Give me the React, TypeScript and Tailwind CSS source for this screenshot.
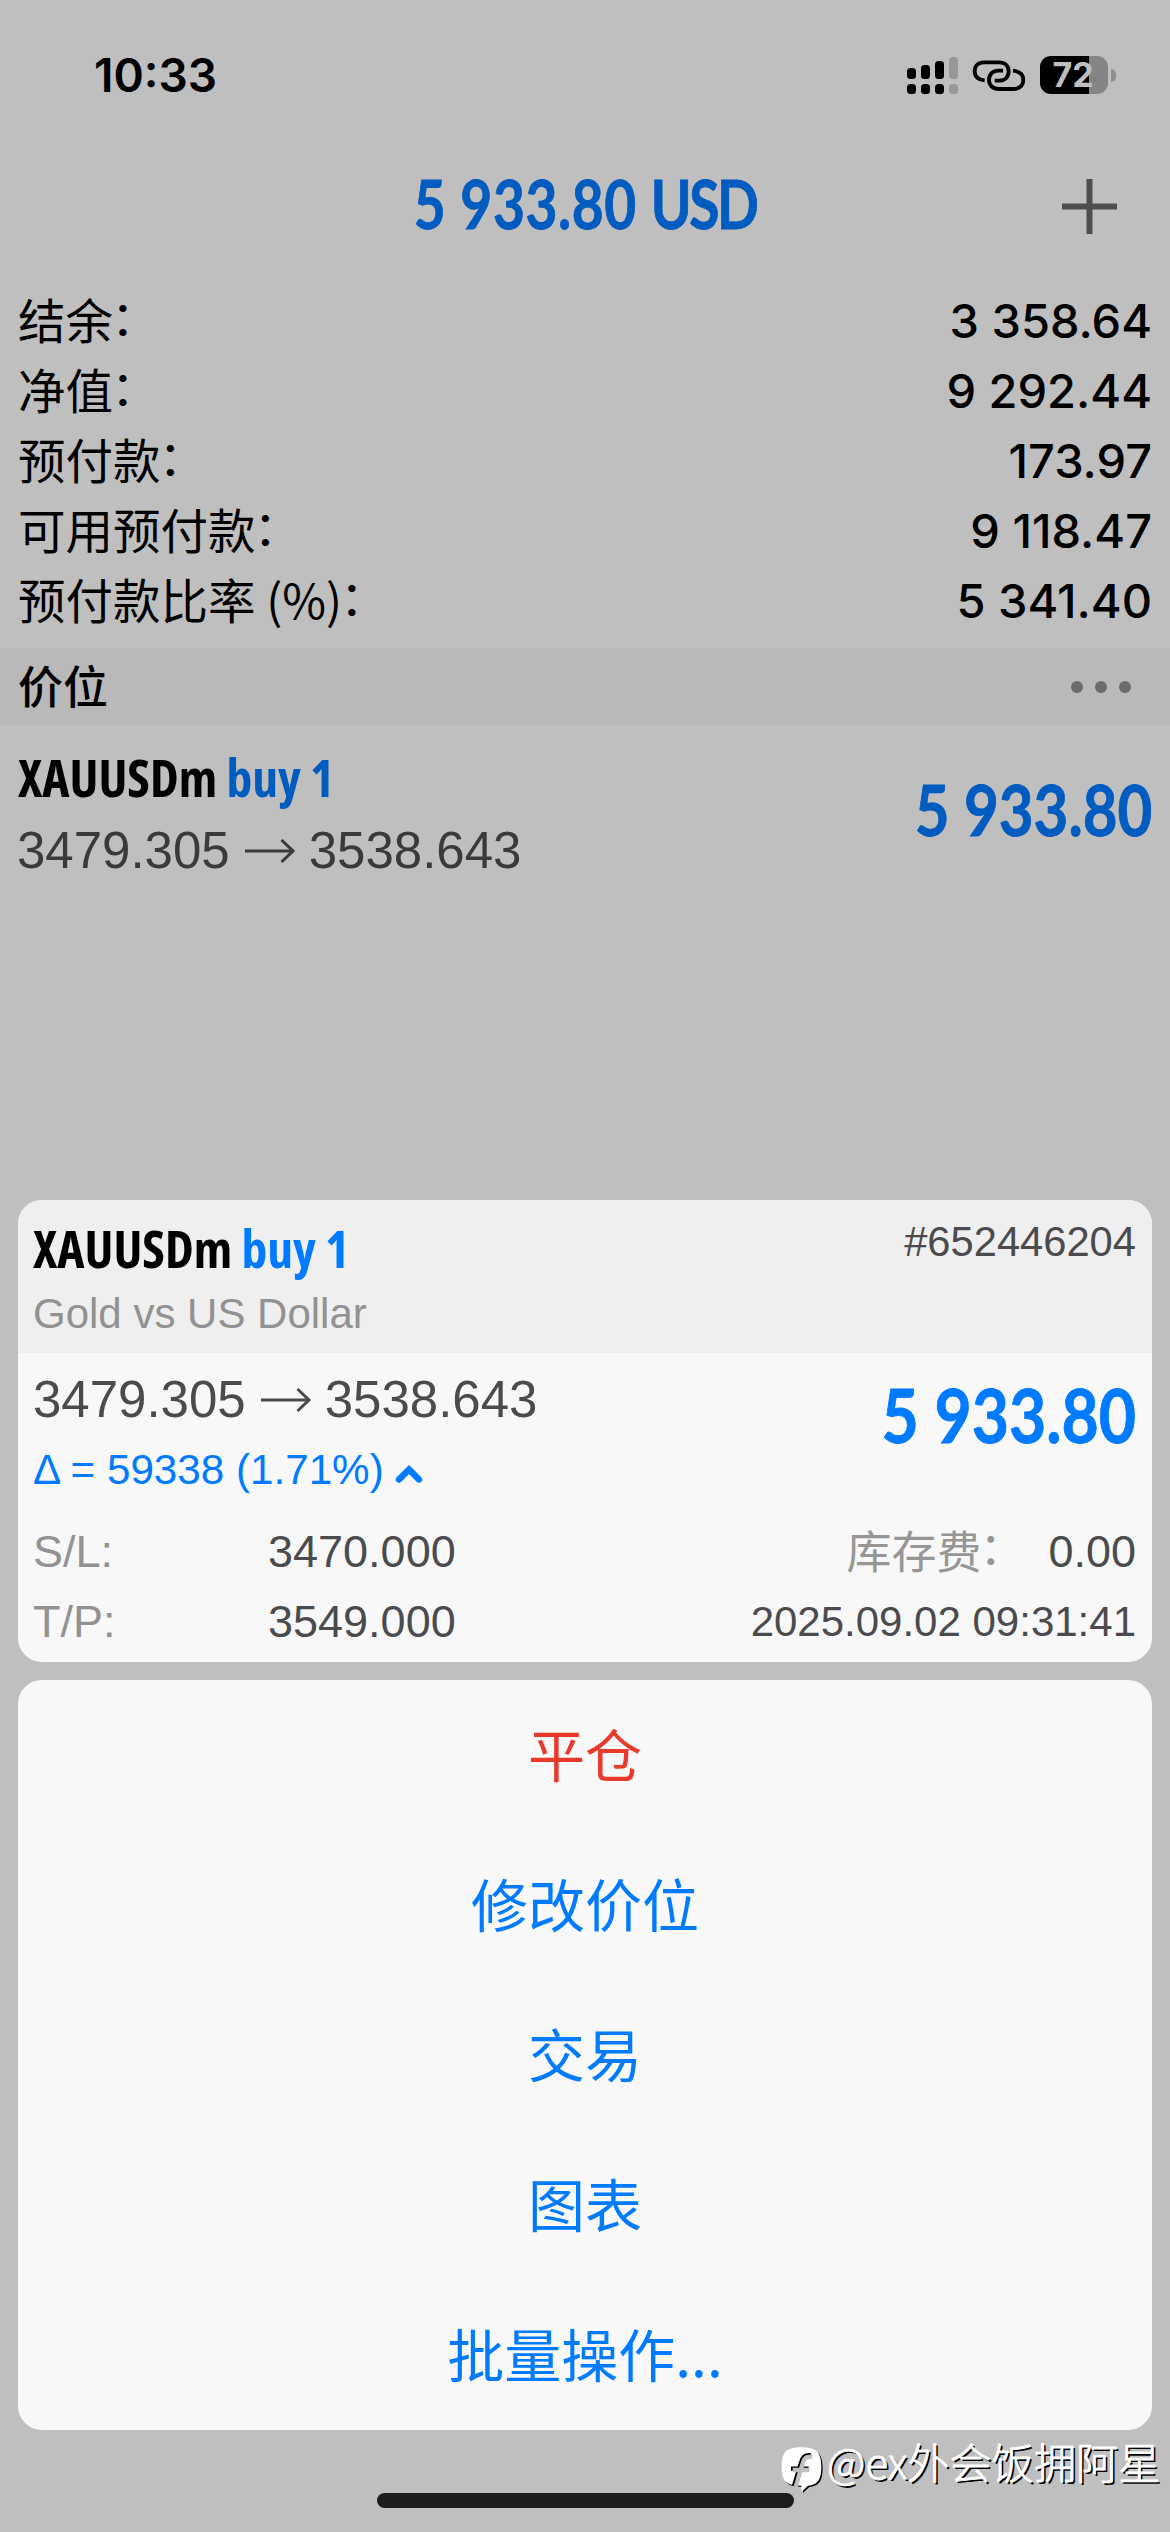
const balances = [
  { label: "结余", value: "3 358.64" },
  { label: "净值", value: "9 292.44" },
  { label: "预付款", value: "173.97" },
  { label: "可用预付款", value: "9 118.47" },
  { label: "预付款比率 (%)", value: "5 341.40" },
];

const actions = [
  { label: "平仓", color: "text-[#e8392a]" },
  { label: "修改价位", color: "text-[#007aff]" },
  { label: "交易", color: "text-[#007aff]" },
  { label: "图表", color: "text-[#007aff]" },
  { label: "批量操作...", color: "text-[#007aff]" },
];

const cjk = "font-['Noto_Sans_CJK_SC',sans-serif]";
const arial = "font-['Liberation_Sans',Arial,sans-serif]";
const condensed = "font-['Open_Sans',sans-serif] font-bold [font-stretch:75%]";
const price =
  "inline-block font-['Lato',sans-serif] font-bold whitespace-pre [-webkit-text-stroke:0.8px_currentColor]";

function SignalIcon() {
  return (
    <svg width="51" height="38" viewBox="0 0 51 38">
      <rect x="0" y="12" width="9" height="11" rx="3.5" />
      <rect x="14" y="9" width="9" height="14" rx="3.5" />
      <rect x="28" y="5" width="9" height="18" rx="3.5" />
      <rect x="42" y="1" width="9" height="22" rx="3.5" fill="#989898" />
      <rect x="0" y="28" width="9" height="10" rx="3.5" />
      <rect x="14" y="28" width="9" height="10" rx="3.5" />
      <rect x="28" y="28" width="9" height="10" rx="3.5" />
      <rect x="42" y="28" width="9" height="10" rx="3.5" fill="#989898" />
    </svg>
  );
}

function LinkIcon() {
  return (
    <svg
      width="54"
      height="33"
      viewBox="277 84 162 99"
      fill="none"
      stroke="#000"
      strokeWidth="11.5"
    >
      <path d="M315 148C296 147 285 137 285 121C285 104 297 94 313 94H358C375 94 387 104 387 121C387 138 376 149 359 149H345" />
      <path d="M400 119C420 121 431 131 431 147C431 163 419 174 402 174H357C340 174 328 163 328 147C328 130 340 119 356 119H370" />
    </svg>
  );
}

function Battery() {
  return (
    <div className="flex items-center">
      <div className="h-[38px] w-[68px] rounded-[11px] bg-linear-to-r from-black from-[72%] to-[#858585] to-[72%] pr-[2px] text-center font-['Inter'] text-[34px] leading-[38px] font-bold text-[#bfbfbf]">
        72
      </div>
      <div className="ml-[3px] h-[13px] w-[5px] rounded-r-full bg-[#8f8f8f]" />
    </div>
  );
}

function Arrow() {
  return (
    <svg
      className="mr-[14px] ml-[15px] shrink-0"
      width="50"
      height="26"
      viewBox="0 0 50 26"
      fill="none"
      stroke="currentColor"
      strokeWidth="3"
    >
      <path d="M0 13H48M36.5 2L48 13L36.5 24" />
    </svg>
  );
}

function SymbolName({ buyColor }: { buyColor: string }) {
  return (
    <p className={`${condensed} text-[51.5px] leading-[70px] whitespace-pre`}>
      XAUUSDm <span className={buyColor}>buy 1</span>
    </p>
  );
}

function PriceMove() {
  return (
    <div className={`${arial} flex items-center text-[51px] leading-[70px]`}>
      <span>3479.305</span>
      <Arrow />
      <span>3538.643</span>
    </div>
  );
}

function PositionCard() {
  return (
    <section className="mx-[18px] h-[462px] overflow-hidden rounded-[24px] bg-[#f8f8f8]">
      <div className="flex h-[153px] justify-between bg-[#efefef] pr-[16px] pl-[15px]">
        <div className="pt-[13px]">
          <SymbolName buyColor="text-[#007aff]" />
          <p className={`${arial} mt-px text-[42px] leading-[60px] text-[#929292]`}>
            Gold vs US Dollar
          </p>
        </div>
        <p className={`${arial} pt-[12px] text-[41.7px] leading-[60px] text-[#4b4b4e]`}>
          #652446204
        </p>
      </div>

      <div className="pt-[12px] pr-[16px] pl-[15px] text-[#4b4b4e]">
        <div className="flex justify-between">
          <div>
            <PriceMove />
            <p
              className={`${arial} flex items-center text-[42.2px] leading-[70px] text-[#007aff]`}
            >
              Δ = 59338 (1.71%)
              <svg
                className="mt-[8px] ml-[11px]"
                width="28"
                height="20"
                viewBox="0 0 28 20"
                fill="none"
                stroke="currentColor"
                strokeWidth="6.5"
                strokeLinecap="round"
              >
                <path d="M4 15.5L14 5.5L24 15.5" />
              </svg>
            </p>
          </div>
          <p
            className={`${price} origin-right scale-x-[0.857] pt-[14px] text-[75px] leading-[70px] text-[#007aff]`}
          >
            5 933.80
          </p>
        </div>

        <div className={`${arial} mt-[12px] flex justify-between text-[45px] leading-[70px]`}>
          <div className="flex">
            <span className="w-[235px] text-[#929292]">S/L:</span>
            <span>3470.000</span>
          </div>
          <div className="flex">
            <span className={`${cjk} -translate-y-[2px] text-[#969696]`}>
              库存费
              <span className="mr-[22px] inline-block -translate-x-[2px] -translate-y-[4px]">
                ：
              </span>
            </span>
            <span>0.00</span>
          </div>
        </div>
        <div className={`${arial} flex justify-between leading-[70px]`}>
          <div className="flex text-[45px]">
            <span className="w-[235px] text-[#929292]">T/P:</span>
            <span>3549.000</span>
          </div>
          <span className="text-[42px]">2025.09.02 09:31:41</span>
        </div>
      </div>
    </section>
  );
}

function Watermark() {
  return (
    <div className="absolute top-[2435px] left-[780px] flex items-start whitespace-nowrap">
      <svg width="44" height="65" viewBox="0 0 132 195">
        <path
          transform="translate(4 4)"
          fill="#000"
          d="M64 37C108 37 124 50 124 96C124 136 112 150 84 152L65 170L64 152C20 152 5 140 5 96C5 50 20 37 64 37Z"
        />
        <path
          fill="#fff"
          d="M64 37C108 37 124 50 124 96C124 136 112 150 84 152L65 170L64 152C20 152 5 140 5 96C5 50 20 37 64 37Z"
        />
        <g fill="none" strokeWidth="13">
          <path stroke="#000" d="M93 61C72 59 67 68 63 84L42 153M33 101H86" />
          <path stroke="#bfbfbf" d="M97 65C77 63 71 71 67 88L47 156M38 105H88" />
        </g>
      </svg>
      <span
        className={`${cjk} -mt-[4px] ml-[3px] text-[42.2px] leading-[60px] font-light text-white [-webkit-text-stroke:0.8px_white] [text-shadow:2px_2px_0_#000]`}
      >
        @ex外会饭拥阿星
      </span>
    </div>
  );
}

export default function App() {
  return (
    <div className="relative flex h-[2532px] w-[1170px] flex-col overflow-hidden bg-[#bfbfbf] text-black">
      <div className="flex h-[150px] items-center justify-between pr-[54px] pl-[94px]">
        <span className="font-['Inter'] text-[46px] leading-none font-semibold">10:33</span>
        <div className="flex items-center">
          <SignalIcon />
          <div className="mr-[14px] ml-[14px]">
            <LinkIcon />
          </div>
          <Battery />
        </div>
      </div>

      <header className="grid h-[110px] grid-cols-[1fr_auto_1fr] items-center">
        <span />
        <h1
          className={`${price} scale-x-[0.835] pb-[2px] text-[66px] leading-none tracking-[0.7px] text-[#005bbf]`}
        >
          5 933.80 <span className="tracking-[-3px]">USD</span>
        </h1>
        <svg
          className="mt-[2px] mr-[53px] justify-self-end"
          width="55"
          height="55"
          viewBox="0 0 55 55"
          stroke="#4e4e4e"
          strokeWidth="6"
        >
          <path d="M27.5 0V55M0 27.5H55" />
        </svg>
      </header>

      <dl className="mt-[26px] px-[18px]">
        {balances.map((row) => (
          <div key={row.label} className="flex h-[70px] items-center justify-between">
            <dt className={`${cjk} pb-[4px] text-[47.5px] leading-[66px]`}>
              {row.label}
              <span className="inline-block -translate-x-[2px] -translate-y-[4px]">：</span>
            </dt>
            <dd className="font-['Inter'] text-[47px] leading-[70px] font-medium">
              {row.value}
            </dd>
          </div>
        ))}
      </dl>

      <div className="mt-[12px] flex h-[77px] items-center justify-between bg-[#b9b9b9] pr-[39px] pl-[18px]">
        <h2 className={`${cjk} pb-[4px] text-[45px] leading-[66px] font-medium`}>价位</h2>
        <div className="flex gap-[12px]">
          <span className="size-[12px] rounded-full bg-[#6b6b6b]" />
          <span className="size-[12px] rounded-full bg-[#6b6b6b]" />
          <span className="size-[12px] rounded-full bg-[#6b6b6b]" />
        </div>
      </div>

      <div className="flex h-[475px] justify-between px-[18px] pt-[17px]">
        <div>
          <SymbolName buyColor="text-[#005bbf]" />
          <div className="-ml-px pt-[4px] text-[#3a3a3d]">
            <PriceMove />
          </div>
        </div>
        <p
          className={`${price} origin-right scale-x-[0.857] pt-[32px] text-[70px] leading-[70px] text-[#005bbf]`}
        >
          5 933.80
        </p>
      </div>

      <PositionCard />

      <ul className={`${cjk} mx-[18px] mt-[18px] rounded-[24px] bg-[#f8f8f8] text-[57px]`}>
        {actions.map((action) => (
          <li
            key={action.label}
            className={`flex h-[150px] items-center justify-center pb-[6px] leading-none ${action.color}`}
          >
            {action.label}
          </li>
        ))}
      </ul>

      <div className="mx-auto mt-[63px] h-[15px] w-[417px] rounded-full bg-[#1c1c1c]" />

      <Watermark />
    </div>
  );
}
